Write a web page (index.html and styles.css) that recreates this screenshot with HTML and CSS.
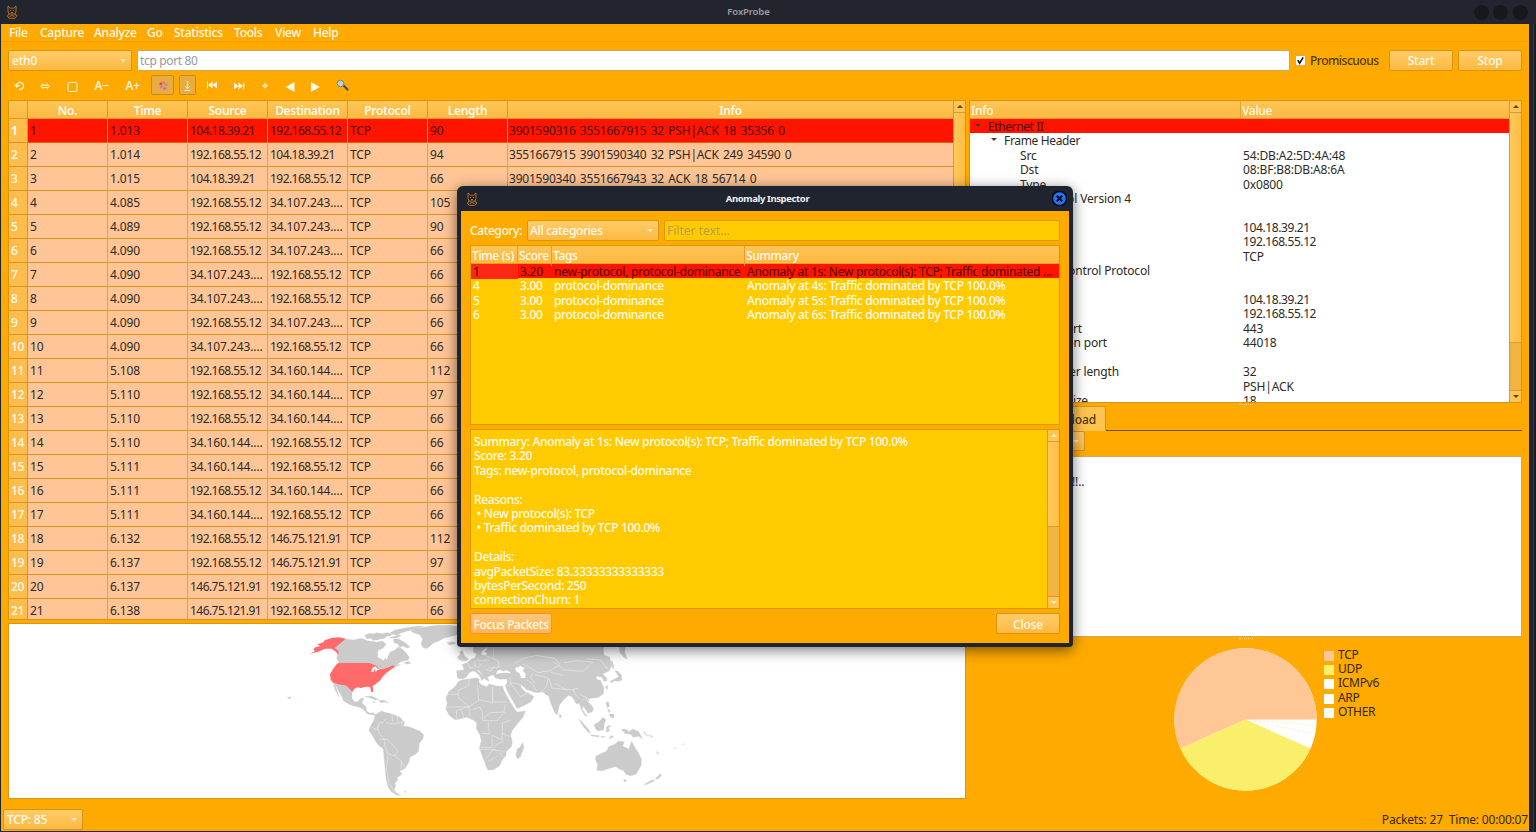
FILE: index.html
```html
<!DOCTYPE html>
<html lang="en">
<head>
<meta charset="utf-8">
<title>FoxProbe</title>
<link rel="stylesheet" href="styles.css">
</head>
<body>
<div class="window">
  <header class="titlebar">
    <svg class="fox" viewBox="0 0 12 14"><path d="M2 6.500V1l2.500 2.200h3L10 1v5.500L9 9H3zM4 5.500h1M7 5.500h1M5 7.500h2M3 9l-1.500 2L3 13.300h6l1.500-2L9 9M3.500 11.500l2.500-1 2.500 1M10 9.500l1 1.500"/></svg>
    <span class="title">FoxProbe</span>
    <div class="winbtns"><i></i><i></i><i></i></div>
  </header>
  <div class="app">
    <nav class="menu"><span style="width:31px">File</span><span style="width:54px">Capture</span><span style="width:53px">Analyze</span><span style="width:27px">Go</span><span style="width:60px">Statistics</span><span style="width:41px">Tools</span><span style="width:38px">View</span><span>Help</span></nav>
    <div class="filter">
      <div class="combo iface">eth0<b class="tri"></b></div>
      <div class="input">tcp port 80</div>
      <div class="check"><svg viewBox="0 0 10 10"><path d="M2 4.500l2 3.500 4-6.500"/></svg></div>
      <span class="promisc">Promiscuous</span>
      <div class="btn start">Start</div>
      <div class="btn stop">Stop</div>
    </div>
    <div class="toolbar">
      <svg viewBox="0 0 345 21">
        <g class="ln">
          <path d="M8.600 11.500A3.500 3.500 0 1 1 11 14.300M6.400 9.600l2.200 2.400 2.900-2" stroke-width="1.300"/>
          <path d="M35.500 8.600l-2.700 2.700 2.700 2.700M38.900 8.600l2.700 2.700-2.700 2.700M34 10.200h6.400M34 12.400h6.400"/>
          <rect x="60" y="7.500" width="9" height="9" rx="1.200"/>
          <circle cx="257" cy="10.800" r="1.600"/><path d="M257 7.800v6M254 10.800h6" opacity=".7"/>
        </g>
        <text x="86.500" y="14.500">A−</text><text x="117.500" y="14.500">A+</text>
        <rect class="tog" x="143.500" y=".5" width="22" height="19" rx="1.500"/>
        <rect class="tog" x="171.500" y=".5" width="16" height="19" rx="1.500"/>
        <path d="M150.500 9c1-3.500 7-4 9-.5 .8 2-1.200 2.500-.7 3.700s1.200 1.200 .2 2.300c-4.500 1.500-9-1-8.500-5.500z" fill="#e39a72"/>
        <circle cx="152.800" cy="8.800" r="1.400" fill="#e0473c"/><circle cx="156" cy="7.600" r="1.200" fill="#e78239"/><circle cx="158.300" cy="9.500" r="1" fill="#8fa3a5"/><circle cx="153.200" cy="12" r="1.100" fill="#9a8fb0"/><circle cx="156.500" cy="13.500" r="1.100" fill="#b4697e"/>
        <path class="ln" d="M179.500 6v7.500M177.300 11.300l2.200 2.500 2.200-2.500M176.800 15.500h5.400"/>
        <g class="fl">
          <path d="M199 6.500h1v7h-1zM204.500 6.500v7L200 10zM209 6.500v7L204.500 10z"/>
          <path d="M226 7.500v7l4.500-3.500zM230.500 7.500v7l4.500-3.500zM235.300 7.500h1v7h-1z"/>
          <path d="M286.500 7v10L277.500 12zM303 7v10l9-5z"/>
        </g>
        <path d="M335.500 10.500l4 4" stroke="#4c504b" stroke-width="2.200" stroke-linecap="round"/><circle cx="332.500" cy="8.500" r="3.300" fill="#b6d5cc" stroke="#728586"/>
      </svg>
    </div>
    <main class="panes">
      <section class="left">
        <div class="packets">
          <div class="grid">
            <div class="row head"><b></b><b>No.</b><b>Time</b><b>Source</b><b>Destination</b><b>Protocol</b><b>Length</b><b>Info</b></div>
            <div class="row sel"><b>1</b><span>1</span><span>1.013</span><span>104.18.39.21</span><span>192.168.55.12</span><span>TCP</span><span>90</span><span class="info">3901590316 3551667915 32 PSH|ACK 18 35356 0</span></div>
            <div class="row"><b>2</b><span>2</span><span>1.014</span><span>192.168.55.12</span><span>104.18.39.21</span><span>TCP</span><span>94</span><span class="info">3551667915 3901590340 32 PSH|ACK 249 34590 0</span></div>
            <div class="row"><b>3</b><span>3</span><span>1.015</span><span>104.18.39.21</span><span>192.168.55.12</span><span>TCP</span><span>66</span><span class="info">3901590340 3551667943 32 ACK 18 56714 0</span></div>
            <div class="row"><b>4</b><span>4</span><span>4.085</span><span>192.168.55.12</span><span class="el">34.107.243.…</span><span>TCP</span><span>105</span><span></span></div>
            <div class="row"><b>5</b><span>5</span><span>4.089</span><span>192.168.55.12</span><span class="el">34.107.243.…</span><span>TCP</span><span>90</span><span></span></div>
            <div class="row"><b>6</b><span>6</span><span>4.090</span><span>192.168.55.12</span><span class="el">34.107.243.…</span><span>TCP</span><span>66</span><span></span></div>
            <div class="row"><b>7</b><span>7</span><span>4.090</span><span class="el">34.107.243.…</span><span>192.168.55.12</span><span>TCP</span><span>66</span><span></span></div>
            <div class="row"><b>8</b><span>8</span><span>4.090</span><span class="el">34.107.243.…</span><span>192.168.55.12</span><span>TCP</span><span>66</span><span></span></div>
            <div class="row"><b>9</b><span>9</span><span>4.090</span><span>192.168.55.12</span><span class="el">34.107.243.…</span><span>TCP</span><span>66</span><span></span></div>
            <div class="row"><b>10</b><span>10</span><span>4.090</span><span class="el">34.107.243.…</span><span>192.168.55.12</span><span>TCP</span><span>66</span><span></span></div>
            <div class="row"><b>11</b><span>11</span><span>5.108</span><span>192.168.55.12</span><span class="el">34.160.144.…</span><span>TCP</span><span>112</span><span></span></div>
            <div class="row"><b>12</b><span>12</span><span>5.110</span><span>192.168.55.12</span><span class="el">34.160.144.…</span><span>TCP</span><span>97</span><span></span></div>
            <div class="row"><b>13</b><span>13</span><span>5.110</span><span>192.168.55.12</span><span class="el">34.160.144.…</span><span>TCP</span><span>66</span><span></span></div>
            <div class="row"><b>14</b><span>14</span><span>5.110</span><span class="el">34.160.144.…</span><span>192.168.55.12</span><span>TCP</span><span>66</span><span></span></div>
            <div class="row"><b>15</b><span>15</span><span>5.111</span><span class="el">34.160.144.…</span><span>192.168.55.12</span><span>TCP</span><span>66</span><span></span></div>
            <div class="row"><b>16</b><span>16</span><span>5.111</span><span>192.168.55.12</span><span class="el">34.160.144.…</span><span>TCP</span><span>66</span><span></span></div>
            <div class="row"><b>17</b><span>17</span><span>5.111</span><span class="el">34.160.144.…</span><span>192.168.55.12</span><span>TCP</span><span>66</span><span></span></div>
            <div class="row"><b>18</b><span>18</span><span>6.132</span><span>192.168.55.12</span><span>146.75.121.91</span><span>TCP</span><span>112</span><span></span></div>
            <div class="row"><b>19</b><span>19</span><span>6.137</span><span>192.168.55.12</span><span>146.75.121.91</span><span>TCP</span><span>97</span><span></span></div>
            <div class="row"><b>20</b><span>20</span><span>6.137</span><span>146.75.121.91</span><span>192.168.55.12</span><span>TCP</span><span>66</span><span></span></div>
            <div class="row"><b>21</b><span>21</span><span>6.138</span><span>146.75.121.91</span><span>192.168.55.12</span><span>TCP</span><span>66</span><span></span></div>
          </div>
          <div class="scroll dark"><i class="cap up"></i><i class="thumb" style="height:430px"></i><i class="track"></i><i class="cap down"></i></div>
        </div>
        <div class="map">
          <svg viewBox="-813 12 2868 522">
            <g class="land">
              <path d="M198 57L220 60 245 55 262 62 290 66 308 64 318 72 310 84 294 92 292 102 304 108 314 112 320 120 325 108 330 96 345 90 355 80 368 88 376 96 388 112 384 120 360 126 350 134 362 134 345 140 325 142 308 147 296 148 292 138 270 129 178 129 170 116 175 95 165 84z"/>
              <path d="M254 46l14-6 12 2 10-4 16 3 16-3 14 4-4 5-22 4-14 8-16 2-8-6-12 1zM330 38l16-8 30-6 34-5 20 0-26 8-22 6-20 6-10 6-14-2zM340 58l14-2 18 10 18 14-8 4-14-6-8 4-6-10-12-4zM296 50l18-2 4 5-14 4zM372 128l14-4 6 6-12 3zM328 54l30-10 6 3-18 8z"/>
              <path d="M392 32L412 24 440 20 470 16 510 16 545 22 540 36 530 44 510 50 492 54 478 62 462 68 450 78 440 86 428 82 424 70 428 58 420 44 400 38zM502 68l14-3 12 4-8 4-12 2z"/>
              <path d="M160 190L196 196 208 206 216 216 216 236 224 246 236 244 240 236 252 234 246 248 252 254 258 262 260 274 270 280 280 278 288 286 276 284 262 282 250 268 238 262 222 258 206 252 190 242 186 230 176 214 168 196 166 196 172 214 178 230 166 212z"/>
              <path d="M254 230l20-2 22 10-10 2-14-6zM298 241l14 0 8 4-18 3zM278 245l8 1-2 3z"/>
              <path d="M286 284L298 277 306 272 310 276 322 278 342 284 360 292 374 308 370 318 386 320 402 326 420 334 431 344 428 358 418 370 416 392 408 402 390 412 386 428 376 444 366 450 358 454 366 460 360 468 350 472 354 480 344 490 348 498 342 508 348 518 362 526 350 525 334 515 324 500 318 474 314 430 310 388 292 372 278 348 267 332 270 320 280 304zM372 514l8 1-4 3z"/>
              <path d="M532 174L530 152 552 150 550 140 545 134 560 128 574 118 584 114 590 102 580 96 580 76 976 76 970 86 972 106 988 110 996 134 988 152 968 162 980 174 980 184 972 184 966 172 950 168 948 176 962 182 972 205 970 222 955 232 925 236 920 242 932 252 941 266 936 276 924 280 916 266 907 258 908 270 922 290 914 286 903 266 898 250 890 252 884 244 878 232 866 226 850 240 838 256 832 285 824 278 812 248 806 228 798 224 790 216 768 218 750 212 738 208 722 192 724 204 738 218 744 218 762 230 752 246 712 266 700 245 682 214 676 198 682 186 680 177 660 178 646 174 640 164 630 168 622 172 628 184 618 180 606 162 596 150 592 152 606 164 614 174 604 182 602 172 588 156 578 153 568 158 558 172 546 177z"/>
              <path d="M545 180L560 178 590 173 598 178 596 186 604 194 620 200 628 192 650 198 668 199 672 212 690 245 706 270 712 277 736 273 730 290 712 312 696 332 692 345 697 365 694 380 678 395 678 406 668 418 658 438 640 449 624 450 618 438 608 410 598 385 604 362 600 345 589 326 590 308 580 300 560 292 540 297 525 299 508 286 497 266 502 250 498 235 506 215 525 200 535 185z"/>
              <path d="M728 368l4 14-11 29-9 5-4-10 3-18 9-6zM536 120l6-16-4-8 9-5 6 16 12 9-2 5-20 3 8-5zM534 108l8-4-2 9-7 3zM838 281l5 5 1 6-5 1z"/>
              <path d="M948 408l32-15 6-13 18-7 11-9 18 1-5 13 18 9 9-23 11 21 9 14 10 20-2 18-15 26-16 4-13-3-10-14-5 0-17-10-16 4-24 8-17-1 3-16-7-18zM1030 478l10 2-5 7zM1125 475l8-4 6-9 7 3-14 13zM1091 494l27-15 6 3-22 11z"/>
              <path d="M1024 328l15 0 8 7 11-8 18 8 12 21-12-7-16 3-9-10-15-1zM942 314l14-8 13-14 9 7-5 10-2 20-17 4-8-8zM896 297l11 10 15 17 9 12-4 3-16-18zM932 344l26 3-2 4-23-4zM982 318l12-1-9 6 4 12-6-2-3 6-1-14zM978 246l8 0 2 14-7 2zM988 282l14 0 0 11-10-1zM982 265l10 8-5 5zM962 349l14 1-10 3zM992 347l10 2-14 8z"/>
              <path d="M1004 152L1014 154 1024 164 1026 180 1016 184 1004 182 994 188 990 184 1006 176 1016 170 1010 160zM1018 82L1036 80 1034 96 1042 118 1030 110 1020 98zM996 122l6 18-3 8-5-18zM976 202l7-7-1 14zM920 240l8-1-3 7z"/>
              <path d="M1090 332l5 6 6 8 4 3-9-5zM1104 344l14 5-3 2zM1129 394l8 7-4 2zM1180 384l9 2zM1206 375l10-4z"/>
            </g>
            <g class="water"><path d="M648 162L652 152 662 150 670 154 680 150 694 160 672 158zM706 144L722 138 734 144 728 152 736 160 736 174 724 174 718 160 708 154zM292 110l8-14 18-12 6 12-8 12-4 14zM604 104L606 94 614 86 624 82 614 96 622 102 612 106z"/></g>
            <g class="usa">
              <path d="M90 102L105 93 100 88 106 82 120 78 112 73 130 67 134 61 154 54 176 52 198 56 165 84 175 92 176 104 167 95 155 86 135 86 119 94zM176 129H270L284 135 292 138 296 148 308 147 325 142 340 136 345 140 328 152 318 160 308 170 300 182 290 190 278 198 280 216 274 216 270 201 256 200 244 204 232 202 222 208 217 216 208 206 196 196 180 194 160 188 152 180 150 162 160 146 170 132zM20 227l5 4 7 2-2 4zM318 245l6 1-3 2z"/>
            </g>
            <g class="water"><path d="M273 155L278 143 286 139 291 141 284 148 280 156zM288 143L299 149 290 151 288 157 285 152z"/></g>
            <g class="borders">
              <path d="M272 320l20 10 6-22 10 0 10-12M318 308l24 4 28-6M292 318l6 24 16 16 0 22M298 358l22 0 24 22 10 14-10 14-20-6-8-22M324 406l-4 40 6 40 16 30M344 408l20 16 0 24M364 424l10 18M336 284l2 22M352 290l2 20M368 302l-4 18"/>
              <path d="M568 178l-2 18-32 16 0 20 34 28 28-20M592 194l4 46 34 6 8 4 0-50M638 200l0 46 40 0M500 224l36-2M500 262l70-2M528 296l2-24 36-12 4 30M546 272l6 22M578 268l22-6 8 16-2 20 24-20 48-2M608 302h44l16-20M604 340l24 2-4-38M604 382h32l0-36M636 346l30 14 2-50M664 310l30-10M666 340l24 10M640 380l30-16M616 418l22-28 36 4M600 388l46 0M626 424l26-16M660 398l8 14M676 252l-4 22"/>
              <path d="M562 128l10 18 14-8-2-16M584 136l10 8 12-14M606 102l24 10 26 12 0 18-30 2M608 122l20-3M640 84l2 28M704 130l30-16 36-8 56 10 14 18-30 18-36 6-44-26M760 158l-8 14 12 18M820 124l32 26 58 4 28-28-46-4-40 6M920 116l40 4 24 28M810 156l40 10M766 164l38 10-4 26-18 16M806 174l10 30 48 6M824 190l30 16 22 4 20-6M880 206l6 18 14 14M898 222l24 12M740 180l16 10 14 24M690 170l2 20 30 40 26-12M682 200l14-12 26 6M590 120l16 2M618 148l14 6 10-14M904 242l14-8 14 24"/>
            </g>
          </svg>
        </div>
      </section>
      <section class="right">
        <div class="tree">
          <div class="treebody">
            <div class="trow thead"><span class="k">Info</span><span class="v">Value</span></div>
            <div class="trow tsel"><b class="arr"></b><span class="k l0">Ethernet II</span></div>
            <div class="trow"><b class="arr a1"></b><span class="k l1">Frame Header</span></div>
            <div class="trow"><span class="k l2">Src</span><span class="v">54:DB:A2:5D:4A:48</span></div>
            <div class="trow"><span class="k l2">Dst</span><span class="v">08:BF:B8:DB:A8:6A</span></div>
            <div class="trow"><span class="k l2">Type</span><span class="v">0x0800</span></div>
            <div class="trow"><span class="k end" style="width:161px">Internet Protocol Version 4</span></div>
            <div class="trow"></div>
            <div class="trow"><span class="k"></span><span class="v ip">104.18.39.21</span></div>
            <div class="trow"><span class="k"></span><span class="v ip">192.168.55.12</span></div>
            <div class="trow"><span class="k"></span><span class="v">TCP</span></div>
            <div class="trow"><span class="k end" style="width:180px">Transmission Control Protocol</span></div>
            <div class="trow"></div>
            <div class="trow"><span class="k"></span><span class="v ip">104.18.39.21</span></div>
            <div class="trow"><span class="k"></span><span class="v ip">192.168.55.12</span></div>
            <div class="trow"><span class="k end" style="width:112px">Source port</span><span class="v v2">443</span></div>
            <div class="trow"><span class="k end" style="width:137px">Destination port</span><span class="v v2">44018</span></div>
            <div class="trow"></div>
            <div class="trow"><span class="k end" style="width:149px">Header length</span><span class="v v2">32</span></div>
            <div class="trow"><span class="k"></span><span class="v">PSH|ACK</span></div>
            <div class="trow"><span class="k end" style="width:118px">Window size</span><span class="v v2">18</span></div>
          </div>
          <div class="scroll dark"><i class="cap up"></i><i class="thumb" style="height:230px"></i><i class="track"></i><i class="cap down"></i></div>
        </div>
        <div class="grip"></div>
        <div class="tabs"><div class="tab">Payload</div></div>
        <div class="combo enc"><b class="tri"></b></div>
        <div class="payload">!!..</div>
        <div class="grip g2"></div>
        <div class="stats">
          <svg class="pie" viewBox="-71.500 -71.500 143 143">
            <circle r="71.200" fill="#fff"/>
            <path d="M0 0H71.200A71.200 71.200 0 1 0-65 29z" fill="#ffc795"/>
            <path d="M0 0L-65 29A71.200 71.200 0 0 0 65 29z" fill="#f9ef6a"/>
            <path d="M8 .7L71 6M8 1.600L70 14.500" stroke="#ffe9c4" stroke-width=".8" stroke-dasharray="3 1.500"/>
          </svg>
          <div class="legend">
            <div><i style="background:#ffc795"></i>TCP</div>
            <div><i style="background:#f9ef6a"></i>UDP</div>
            <div><i></i>ICMPv6</div>
            <div><i></i>ARP</div>
            <div><i></i>OTHER</div>
          </div>
        </div>
      </section>
    </main>
    <footer class="status"><div class="combo proto">TCP: 85<b class="tri"></b></div><span class="counts">Packets: 27&nbsp; Time: 00:00:07</span></footer>
  </div>
</div>

<div class="dialog">
  <header class="dtitle">
    <svg class="fox" viewBox="0 0 12 14"><path d="M2 6.500V1l2.500 2.200h3L10 1v5.500L9 9H3zM4 5.500h1M7 5.500h1M5 7.500h2M3 9l-1.500 2L3 13.300h6l1.500-2L9 9M3.500 11.500l2.500-1 2.500 1M10 9.500l1 1.500"/></svg>
    <span class="title">Anomaly Inspector</span>
    <svg class="close" viewBox="0 0 15 15"><circle cx="7.500" cy="7.500" r="7.300" fill="#2a72f0"/><path d="M4.800 4.800l5.400 5.400M10.200 4.800l-5.400 5.400"/></svg>
  </header>
  <div class="dbody">
    <div class="drow"><span class="cat">Category:</span><div class="combo catbox">All categories<b class="tri"></b></div><div class="dinput">Filter text…</div></div>
    <div class="alist">
      <div class="arow ahead"><span>Time (s)</span><span>Score</span><span>Tags</span><span>Summary</span></div>
      <div class="arow asel"><span>1</span><span>3.20</span><span>new-protocol, protocol-dominance</span><span>Anomaly at 1s: New protocol(s): TCP; Traffic dominated …</span></div>
      <div class="arow"><span>4</span><span>3.00</span><span>protocol-dominance</span><span>Anomaly at 4s: Traffic dominated by TCP 100.0%</span></div>
      <div class="arow"><span>5</span><span>3.00</span><span>protocol-dominance</span><span>Anomaly at 5s: Traffic dominated by TCP 100.0%</span></div>
      <div class="arow"><span>6</span><span>3.00</span><span>protocol-dominance</span><span>Anomaly at 6s: Traffic dominated by TCP 100.0%</span></div>
    </div>
    <div class="detail">
      <pre>Summary: Anomaly at 1s: New protocol(s): TCP; Traffic dominated by TCP 100.0%
Score: 3.20
Tags: new-protocol, protocol-dominance

Reasons:
 • New protocol(s): TCP
 • Traffic dominated by TCP 100.0%

Details:
avgPacketSize: 83.33333333333333
bytesPerSecond: 250
connectionChurn: 1</pre>
      <div class="scroll"><i class="cap up"></i><i class="thumb" style="height:85px"></i><i class="track"></i><i class="cap down"></i></div>
    </div>
    <div class="dfoot"><div class="btn focus">Focus Packets</div><div class="btn">Close</div></div>
  </div>
</div>
</body>
</html>
```
FILE: styles.css
```css
* { box-sizing: border-box; }
body { margin: 0; width: 1536px; height: 832px; overflow: hidden; position: relative; font: 12px/14.4px "Noto Sans", "Open Sans", sans-serif; letter-spacing: -.12px; color: #2d2a24; }
i { font-style: normal; }
.window { width: 1536px; height: 832px; background: linear-gradient(90deg, #20242f 1533px, #3a3b43 1533px, #3a3b43 1534px, #181a26 1534px); }
.titlebar { height: 24px; display: flex; align-items: center; justify-content: space-between; background: #23252e; padding: 0 8px 0 6px; }
.fox { width: 12px; height: 14px; fill: none; stroke: #b3701a; stroke-width: 1; }
.title { font-weight: 600; font-size: 9.5px; color: #9b9ca0; margin-left: 5px; }
.winbtns { display: flex; gap: 4.5px; }
.winbtns i { width: 15px; height: 15px; border-radius: 50%; background: #17181c; }
.app { margin-left: 1px; width: 1528px; height: 807px; background: #ffaa00; display: flex; flex-direction: column; }
.menu { height: 18px; display: flex; padding-left: 8px; color: #fffaf0; border-bottom: 1px solid #f2a000; line-height: 17px; font-weight: 500; letter-spacing: -.25px; }
.menu span { white-space: nowrap; }
.filter { height: 21px; margin-top: 8px; display: flex; padding-left: 7px; color: #fff3d6; line-height: 19px; }
.combo, .btn { border: 1px solid #d89414; border-radius: 2px; background: linear-gradient(#ffcc6a, #fdb941); position: relative; color: #fffaee; white-space: nowrap; line-height: 19px; font-weight: 500; letter-spacing: -.2px; }
.tri { position: absolute; right: 5px; top: 8px; border: 3px solid transparent; border-top-color: #ffefcc; border-bottom: 0; }
.iface { width: 124px; padding-left: 3px; letter-spacing: -.2px; }
.input { margin-left: 5px; width: 1153px; background: #fff; border: 1px solid #d8a552; border-radius: 2px; color: #9a9a9a; padding-left: 2px; line-height: 19px; letter-spacing: -.35px; }
.check { margin: 5px 0 0 5px; width: 11px; height: 11px; background: #fff; border: 1px solid #e0a848; display: flex; }
.check svg { width: 9px; height: 9px; fill: none; stroke: #111; stroke-width: 1.7; }
.promisc { width: 83px; padding-left: 4px; color: #50390a; line-height: 21px; letter-spacing: -.5px; font-weight: 500; }
.btn { width: 64px; height: 21px; text-align: center; }
.stop { margin-left: 5px; }
.toolbar { height: 21px; margin: 4px 0 0 7px; display: flex; }
.toolbar svg { width: 345px; height: 21px; }
.toolbar text { font: 500 12px "Noto Sans", sans-serif; fill: #fffaee; }
.ln { fill: none; stroke: #fff5de; stroke-width: 1; }
.fl { fill: #fff8e8; }
.tog { fill: #e8ac43; stroke: #c58b22; }
.panes { display: flex; padding-left: 7px; height: 705px; margin-top: 4px; gap: 3px; }
.left { width: 958px; }
.packets { display: flex; height: 520px; border: 1px solid #d89414; overflow: hidden; }
.grid { width: 945px; }
.row { display: grid; grid-template-columns: 19px 80px 80px 80px 80px 80px 80px 1fr; height: 24px; line-height: 23px; background: #ffc596; }
.row > * { border-right: 1px solid #e3a03c; border-bottom: 1px solid #d49524; padding-left: 2px; white-space: nowrap; overflow: hidden; font-weight: 400; }
.row span:nth-child(4), .row span:nth-child(5) { letter-spacing: -.55px; }
.row span.el { letter-spacing: -.12px; }
.row .info { letter-spacing: -.21px; word-spacing: 1.4px; padding-left: 1px; }
.row b:first-child { background: #fdbd4c; color: #fffaee; border-color: #d49524; font-weight: 500; line-height: 24px; letter-spacing: -.4px; }
.row > *:last-child { border-right: 0; }
.row.head { height: 18px; line-height: 20px; background: linear-gradient(#ffc555, #fbb941); }
.row.head b { font-weight: 600; text-align: center; color: #fffaf0; padding: 0; background: none; border-color: #d8992a; letter-spacing: -.3px; line-height: 20px; }
.row.sel { background: #ff1400; color: #4d0800; }
.row.sel span { border-bottom-color: #e06010; }
.row.sel b { font-weight: 700; }
.scroll { width: 12px; display: flex; flex-direction: column; border-left: 1px solid #d89a2b; background: #f2b440; }
.cap { height: 12px; background: #ffc451; border-bottom: 1px solid #d99c30; display: flex; align-items: center; justify-content: center; flex: none; }
.cap::after { content: ""; border: 3px solid transparent; border-bottom-color: #fff0c8; border-top: 0; }
.cap.down { border-bottom: 0; border-top: 1px solid #d99c30; }
.cap.down::after { border-bottom: 0; border-top: 3px solid #fff0c8; }
.dark .cap::after { border-bottom-color: #5c4312; }
.dark .cap.down::after { border-top-color: #5c4312; }
.thumb { background: linear-gradient(90deg, #ffc95c, #ffbd44); border-bottom: 1px solid #d99c30; flex: none; }
.track { flex: 1; }
.map { margin-top: 3px; height: 176px; border: 1px solid #d89414; background: #fff; overflow: hidden; }
.map svg { display: block; width: 956px; height: 174px; }
.land { fill: #cbcbcb; stroke: #cbcbcb; stroke-width: 1; }
.water { fill: #fff; }
.usa { fill: #ff6b6b; }
.borders { fill: none; stroke: #e9e9e9; stroke-width: 2; stroke-linejoin: round; }
.right { width: 553px; }
.tree { display: flex; height: 303px; border: 1px solid #d89414; background: #fff; overflow: hidden; }
.treebody { width: 541px; }
.trow { height: 14.43px; display: flex; position: relative; white-space: nowrap; line-height: 15px; letter-spacing: -.15px; }
.k { width: 271px; flex: none; }
.k.end { text-align: right; }
.v { padding-left: 2px; }
.ip { letter-spacing: -.4px; }
.v2 { position: absolute; left: 271px; }
.thead { height: 18px; line-height: 20px; background: linear-gradient(#ffc555, #fbb941); color: #fffaee; border-bottom: 1px solid #d89a2b; font-weight: 500; letter-spacing: -.3px; }
.thead .k { padding-left: 1px; border-right: 1px solid #e3a636; }
.thead .v { padding-left: 1px; }
.tsel { background: #ff1400; color: #4d0800; }
.l0 { padding-left: 18px; letter-spacing: -.4px; } .l1 { padding-left: 34px; letter-spacing: -.35px; } .l2 { padding-left: 50px; }
.arr { position: absolute; left: 5px; top: 5px; border: 3px solid transparent; border-top-color: #4b3a30; border-bottom: 0; }
.a1 { left: 21px; }
.grip { height: 1px; width: 14px; margin: 1px 0 1px 270px; border-top: 1px dotted #ffd88c; }
.tabs { height: 25px; border-bottom: 1px solid #6a511f; }
.tab { width: 137px; height: 25px; background: #ffc350; border: 1px solid #d89414; border-bottom: 0; border-radius: 2px 2px 0 0; text-align: right; padding-right: 9px; line-height: 25px; color: #4b390f; font-weight: 500; }
.enc { width: 116px; height: 20px; }
.payload { margin-top: 5px; height: 181px; background: #fff; border: 1px solid #d8a552; padding: 18px 0 0 102px; }
.g2 { margin-top: 1px; }
.stats { display: flex; padding: 8px 0 0 205px; }
.pie { width: 143px; height: 143px; flex: none; }
.legend { padding-left: 7px; margin-top: -.5px; color: #33270a; letter-spacing: -.3px; }
.legend div { display: flex; height: 14.4px; align-items: center; }
.legend i { width: 10px; height: 10px; background: #fff; margin: 2px 4px 0 0; }
.status { display: flex; justify-content: space-between; margin-top: 4px; padding: 0 1px 0 2px; color: #33270a; }
.proto { width: 80px; height: 21px; padding-left: 3px; }
.counts { line-height: 21px; letter-spacing: -.18px; }

.dialog { position: absolute; left: 457px; top: 186px; width: 616px; height: 461px; background: #20242e; border-radius: 6px 6px 4px 4px; padding: 0 4px 4px; box-shadow: 0 3px 14px rgba(0, 0, 0, .55); color: #fffaee; font-weight: 500; letter-spacing: -.34px; }
.dtitle { height: 25px; display: flex; align-items: center; justify-content: space-between; padding: 0 2px 0 5px; }
.dtitle .title { color: #f2f2f2; margin: 2px 0 0 5px; font-weight: 700; letter-spacing: -.37px; }
.close { width: 15px; height: 15px; fill: none; stroke: #0b1020; stroke-width: 2; }
.dbody { background: #ffaa00; height: 432px; padding: 9px 9px 0; }
.drow { display: flex; height: 21px; line-height: 21px; }
.cat { width: 57px; letter-spacing: -.4px; }
.catbox { width: 132px; padding-left: 2px; letter-spacing: -.35px; }
.dinput { margin-left: 5px; flex: 1; background: #ffcb00; border: 1px solid #d89a00; border-radius: 2px; color: #b8a04c; padding-left: 2px; line-height: 19px; font-weight: 400; letter-spacing: 0; }
.alist { margin-top: 4px; height: 180px; background: #ffcb00; border: 1px solid #d89a00; }
.arow { display: grid; grid-template-columns: 47px 34px 193px 1fr; height: 14.4px; line-height: 15px; white-space: nowrap; }
.arow span { padding-left: 2px; }
.ahead { height: 18px; line-height: 20px; background: linear-gradient(#ffc555, #fbb941); border-bottom: 1px solid #e0a020; }
.ahead span { border-right: 1px solid #e0a436; padding-left: 1px; }
.ahead span:last-child { border: 0; }
.asel { background: #ff1400; color: #4d0800; font-weight: 400; letter-spacing: -.26px; }
.asel span:first-child { background: #fd2814; }
.detail { margin-top: 4px; height: 180px; background: #ffcb00; border: 1px solid #d89a00; display: flex; justify-content: space-between; overflow: hidden; }
.detail pre { margin: 0; padding: 5px 0 0 3px; font: inherit; line-height: 14.4px; }
.dfoot { display: flex; justify-content: space-between; margin-top: 4px; }
.focus { width: 82px; border-color: #ff8a3c; background: linear-gradient(#ffc67a, #fdb75a); letter-spacing: -.4px; }
.dfoot .btn { line-height: 21px; }
```
